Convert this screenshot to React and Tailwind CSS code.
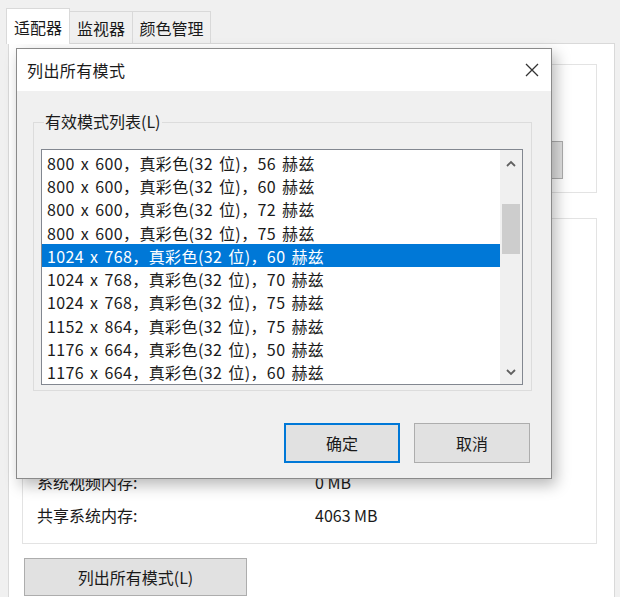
import React from "react";

const rows = [
  "800 x 600，真彩色(32 位)，56 赫兹",
  "800 x 600，真彩色(32 位)，60 赫兹",
  "800 x 600，真彩色(32 位)，72 赫兹",
  "800 x 600，真彩色(32 位)，75 赫兹",
  "1024 x 768，真彩色(32 位)，60 赫兹",
  "1024 x 768，真彩色(32 位)，70 赫兹",
  "1024 x 768，真彩色(32 位)，75 赫兹",
  "1152 x 864，真彩色(32 位)，75 赫兹",
  "1176 x 664，真彩色(32 位)，50 赫兹",
  "1176 x 664，真彩色(32 位)，60 赫兹",
];

function Chevron({ up }) {
  return (
    <svg width="10" height="7" viewBox="0 0 10 7">
      <path
        d={up ? "M1 6 L5 2 L9 6" : "M1 1 L5 5 L9 1"}
        fill="none"
        stroke="#606060"
        strokeWidth="1.8"
      />
    </svg>
  );
}

export default function App() {
  return (
    <div className="relative w-[620px] h-[597px] overflow-hidden bg-[#f0f0f0] text-[#1a1a1a] font-['Noto_Sans_CJK_SC','Noto_Sans',sans-serif] text-[16px]">
      {/* Tabs */}
      <div className="flex items-end h-[43px] pl-[6px]">
        <div className="relative z-10 h-[36px] w-[64px] bg-white border border-b-0 border-[#d9d9d9] flex items-center justify-center -mb-px">
          适配器
        </div>
        <div className="h-[32px] w-[63px] bg-[#f0f0f0] border border-l-0 border-b-0 border-[#d9d9d9] flex items-center justify-center">
          监视器
        </div>
        <div className="h-[32px] w-[78px] bg-[#f0f0f0] border border-l-0 border-b-0 border-[#d9d9d9] flex items-center justify-center">
          颜色管理
        </div>
      </div>

      {/* Page */}
      <div className="ml-[8px] w-[607px] h-[560px] bg-white border border-[#d9d9d9] pl-[13px] pr-[17px] pt-[20px] flex flex-col">
        <div className="h-[129px] border border-[#e3e3e3] flex justify-end items-start pr-[33px] pt-[76px]">
          <div className="w-[120px] h-[38px] bg-[#e1e1e1] border border-[#adadad]" />
        </div>
        <div className="mt-[25px] h-[326px] border border-[#e3e3e3] flex flex-col justify-end pl-[14px] pb-[16px] gap-[9px]">
          <div className="flex h-[24px] items-center">
            <span className="w-[278px]">系统视频内存:</span>
            <span>0 MB</span>
          </div>
          <div className="flex h-[24px] items-center">
            <span className="w-[278px]">共享系统内存:</span>
            <span>4063 MB</span>
          </div>
        </div>
        <div className="mt-[14px] ml-[2px] w-[223px] h-[38px] bg-[#e1e1e1] border border-[#adadad] flex items-center justify-center">
          列出所有模式(L)
        </div>
      </div>

      {/* Dialog */}
      <div className="absolute left-[16px] top-[48px] w-[536px] h-[431px] bg-[#f0f0f0] border border-[#8a8a8a] shadow-[4px_6px_14px_rgba(0,0,0,0.28)] flex flex-col">
        <div className="h-[42px] bg-white flex items-center justify-between pl-[10px] pr-[12px] shrink-0">
          <span className="tracking-[0.4px]">列出所有模式</span>
          <svg width="14" height="14" viewBox="0 0 14 14">
            <path d="M1 1 L13 13 M13 1 L1 13" stroke="#333" strokeWidth="1.3" fill="none" />
          </svg>
        </div>
        <div className="pl-[16px] pr-[19px] pt-[31px] flex flex-col">
          <div className="relative h-[269px] border border-[#dcdcdc] pl-[7px] pr-[8px] pt-[26px]">
            <span className="absolute left-[10px] -top-[14px] bg-[#f0f0f0] px-[1px] leading-[24px]">
              有效模式列表(L)
            </span>
            <div className="h-[236px] bg-white border border-[#828790] flex">
              <div className="flex-1 flex flex-col pt-px">
                {rows.map((r, i) => (
                  <div
                    key={i}
                    className={
                      "h-[23.3px] flex items-center pl-[5px] whitespace-nowrap tracking-[0.4px] [word-spacing:2px] " +
                      (i === 4 ? "bg-[#0078d7] text-white" : "")
                    }
                  >
                    {r}
                  </div>
                ))}
              </div>
              <div className="w-[22px] bg-[#f0f0f0] flex flex-col items-center">
                <div className="h-[26px] flex items-center justify-center">
                  <Chevron up />
                </div>
                <div className="mt-[28px] w-[18px] h-[50px] bg-[#cdcdcd]" />
                <div className="flex-1" />
                <div className="h-[24px] flex items-center justify-center">
                  <Chevron />
                </div>
              </div>
            </div>
          </div>
          <div className="mt-[32px] flex justify-end gap-[14px] pr-[2px]">
            <div className="w-[116px] h-[40px] bg-[#e1e1e1] border-2 border-[#0078d7] flex items-center justify-center">
              确定
            </div>
            <div className="w-[116px] h-[40px] bg-[#e1e1e1] border border-[#adadad] flex items-center justify-center">
              取消
            </div>
          </div>
        </div>
      </div>
    </div>
  );
}
